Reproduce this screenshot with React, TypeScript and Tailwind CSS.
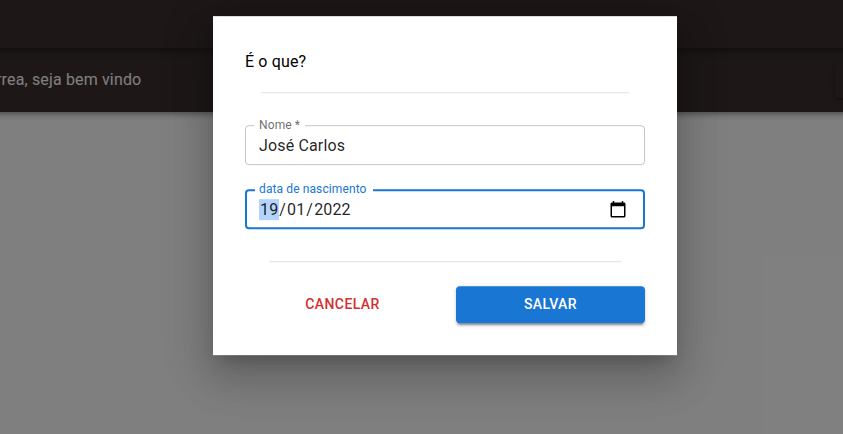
import React from 'react';

function CalendarIcon() {
  return (
    <svg viewBox="0 0 24 24" className="mb-[2px] h-[18px] w-[18px] shrink-0 fill-black" aria-hidden="true">
      <path d="M20 3h-1V1h-2v2H7V1H5v2H4c-1.1 0-2 .9-2 2v16c0 1.1.9 2 2 2h16c1.1 0 2-.9 2-2V5c0-1.1-.9-2-2-2zm0 18H4V8h16v13z" />
    </svg>
  );
}

function Page() {
  return (
    <div className="-mx-4 h-[434px] bg-white">
      <div className="relative z-20 h-12 bg-[#3a2f2f] shadow-[0px_2px_4px_-1px_rgba(0,0,0,0.2),0px_4px_5px_0px_rgba(0,0,0,0.14),0px_1px_10px_0px_rgba(0,0,0,0.12)]" />
      <div className="relative z-10 flex h-16 items-center justify-between bg-[#3a2f2f] pr-4 shadow-[0px_2px_4px_-1px_rgba(0,0,0,0.2),0px_4px_5px_0px_rgba(0,0,0,0.14),0px_1px_10px_0px_rgba(0,0,0,0.12)]">
        <p className="pl-3 whitespace-nowrap text-base tracking-[0.00938em] text-white">rrea, seja bem vindo</p>
        <div className="-mr-4 h-9 w-6 rounded bg-[#3a2f2f] shadow-[0px_3px_1px_-2px_rgba(0,0,0,0.2),0px_2px_2px_0px_rgba(0,0,0,0.14),0px_1px_5px_0px_rgba(0,0,0,0.12)]" />
      </div>
    </div>
  );
}

function Dialog() {
  return (
    <div
      role="dialog"
      className="ml-[213px] mt-4 h-[339px] w-[464px] translate-y-[0.15px] bg-white p-8 text-black/87 shadow-[0px_11px_15px_-7px_rgba(0,0,0,0.2),0px_24px_38px_3px_rgba(0,0,0,0.14),0px_9px_46px_8px_rgba(0,0,0,0.12)]"
    >
      <h2 className="h-11 pt-[2px] text-base leading-6 tracking-[0.00938em] text-black">É o que?</h2>
      <hr className="mx-4 border-t border-black/12" />
      <fieldset className="mt-[23px] flex h-[49px] w-[400px] flex-col rounded border border-black/23 px-[8px] pb-0">
        <legend className="h-[18px] px-[5px] text-xs leading-[18px] tracking-[0.00938em] text-black/60">Nome *</legend>
        <div className="pl-[5px] text-base leading-[23px] tracking-[0.00938em]">José Carlos</div>
      </fieldset>
      <fieldset className="mt-[15px] flex h-[49px] w-[400px] flex-col rounded border-2 border-[#1976d2] px-[8px]">
        <legend className="h-[20px] pl-1 pr-[6px] text-xs leading-[18px] tracking-[0.00938em] text-[#1976d2]">data de nascimento</legend>
        <div className="-mt-[2px] flex h-[23px] shrink-0 items-center justify-between pl-1 pr-2 text-base tracking-[0.00938em]">
          <div className="flex leading-[21px]">
            <span className="bg-[#b3d4fc] px-px">19</span>
            <span>/</span>
            <span className="px-px">01</span>
            <span>/</span>
            <span className="px-px">2022</span>
          </div>
          <CalendarIcon />
        </div>
      </fieldset>
      <hr className="mx-6 mt-8 border-t border-black/12" />
      <div className="mt-6 flex gap-4 text-sm font-medium leading-[24px] tracking-[0.02857em]">
        <button className="h-[37px] w-[195px] rounded pb-[2px] text-[#d32f2f]">CANCELAR</button>
        <button className="h-[37px] w-[189px] rounded bg-[#1976d2] pb-[2px] text-white shadow-[0px_3px_1px_-2px_rgba(0,0,0,0.2),0px_2px_2px_0px_rgba(0,0,0,0.14),0px_1px_5px_0px_rgba(0,0,0,0.12)]">SALVAR</button>
      </div>
    </div>
  );
}

export default function App() {
  return (
    <div className="relative h-[434px] w-[843px] overflow-hidden font-['Roboto',sans-serif]">
      <Page />
      <div className="absolute inset-0 z-30 flex items-start bg-black/50">
        <Dialog />
      </div>
    </div>
  );
}
